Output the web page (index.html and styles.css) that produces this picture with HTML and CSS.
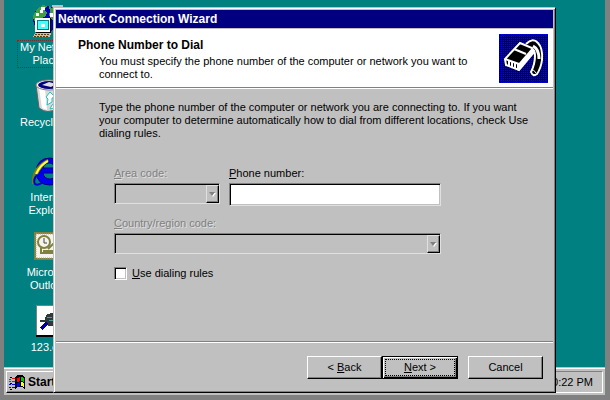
FILE: index.html
```html
<!DOCTYPE html>
<html lang="en">
<head>
<meta charset="UTF-8">
<meta name="viewport" content="width=device-width, initial-scale=1.0">
<title>Network Connection Wizard</title>
<link rel="stylesheet" href="styles.css">
</head>
<body>
  <div class="screen">
    <main class="desktop">
      <ul class="icons">
        <li class="icon selected">
          <svg width="34" height="34" viewBox="0 0 34 34" shape-rendering="crispEdges">
            <circle cx="14" cy="15" r="13" fill="#0000c0"/>
            <path d="M1 12l4-7 6-4 4 1-3 4 3 3-2 4-5 1-2 3H2zM17 2l5 3 3 6-5 5-3-5 1-4z" fill="#40a040"/>
            <path d="M9 3h4v3h-2v3H8zM4 9h3v3H4zM18 9h3v4h-3z" fill="#fff"/>
            <path d="M20 1h11v3h-2v9h-7V3h-2z" fill="#c0c0c0"/>
            <rect x="23" y="4" width="7" height="7" fill="#000080"/>
            <rect x="3" y="14" width="16" height="14" fill="#fff"/>
            <path d="M19 14v15H4v-1h14V14z" fill="#000"/>
            <rect x="5" y="16" width="12" height="10" fill="#008080"/>
            <rect x="6" y="17" width="10" height="8" fill="#40ffff"/>
            <rect x="9" y="20" width="4" height="3" fill="#fff"/>
            <path d="M3 29h16l-1 4H1z" fill="#c0c0c0"/>
            <path d="M3 30h15M2 32h15" stroke="#604000" stroke-dasharray="2 1"/>
          </svg>
          <span class="name">My Network Places</span>
        </li>
        <li class="icon">
          <svg width="34" height="34" viewBox="0 0 34 34">
            <path d="M4 6l3 23q9 7 18 0l3-23z" fill="#d8d8d8" stroke="#606060"/>
            <path d="M7 9l3 20 5 2-2-21z" fill="#fff"/>
            <ellipse cx="17" cy="6" rx="13" ry="5" fill="#fff" stroke="#808080"/>
            <ellipse cx="17" cy="6" rx="11" ry="4" fill="#000080"/>
            <path d="M10 6l7-3 7 2-5 3z" fill="#e0e0e0"/>
            <path d="M14 18l4-5 5 5-3 1v4l-5 3 1-6zM20 26l5-3v5l-7 2z" fill="#fff" stroke="#20c0c0"/>
          </svg>
          <span class="name">Recycle Bin</span>
        </li>
        <li class="icon">
          <svg width="34" height="34" viewBox="0 0 34 34">
            <path d="M30 19H11q1 6 7 6 4 0 5-3h7q-3 9-12 9Q5 31 4 18 5 4 18 4q12 0 12 15zM11 14h12q-1-5-6-5-5 0-6 5z" fill="#0000f0" stroke="#000080" fill-rule="evenodd"/>
            <path d="M1 30Q0 14 16 6 9 12 5 20" fill="none" stroke="#808000" stroke-width="2"/>
            <path d="M4 20Q8 11 16 7" fill="none" stroke="#ffff40" stroke-width="2"/>
            <path d="M4 22q-3 5-1 8 3 2 8-2" fill="none" stroke="#0000d0" stroke-width="2"/>
          </svg>
          <span class="name">Internet Explorer</span>
        </li>
        <li class="icon">
          <svg width="34" height="34" viewBox="0 0 34 34">
            <rect x="3" y="4" width="28" height="26" fill="#f4f4ec" stroke="#808040" stroke-width="2"/>
            <rect x="4" y="5" width="26" height="24" fill="none" stroke="#b0a890" stroke-dasharray="1 1"/>
            <circle cx="12" cy="13" r="6" fill="none" stroke="#808040" stroke-width="2"/>
            <path d="M12 9v5h3" fill="none" stroke="#404040"/>
            <path d="M9 19v5h19v-9h-7l-5 5M11 22h10" fill="none" stroke="#808040" stroke-width="2"/>
          </svg>
          <span class="name">Microsoft Outlook</span>
        </li>
        <li class="icon">
          <svg width="34" height="34" viewBox="0 0 34 34" shape-rendering="crispEdges">
            <path d="M4 1h26v31H4z" fill="#fff"/>
            <path d="M4 32V1h26" fill="none" stroke="#808080"/>
            <path d="M4 32h26V1" fill="none" stroke="#000" stroke-width="2"/>
            <path d="M14 11l5-2 6 2 2 8-4 4-9-2-1-3H8v-2h5z" fill="#303838"/>
            <path d="M15 13h5M17 16h5M21 19h3" stroke="#40a0a0" stroke-width="1"/>
            <path d="M15 19l-6 6" stroke="#0000a0" stroke-width="3"/>
          </svg>
          <span class="name">123.cer</span>
        </li>
      </ul>
    </main>

    <footer class="taskbar">
      <button type="button" class="start">
        <svg width="17" height="15" viewBox="0 0 17 15" shape-rendering="crispEdges">
          <path d="M6 2l3-2h4l3 2v12l-3-2H9l-3 2z" fill="#000"/>
          <path d="M8 3l3-1v4L8 7z" fill="#f00"/>
          <path d="M12 2l3 1v4l-3-1z" fill="#0c0"/>
          <path d="M8 8l3-1v4l-3 1z" fill="#00f"/>
          <path d="M12 7l3 1v4l-3-1z" fill="#ff0"/>
          <path d="M0 4h2M3 3h3M0 6h2M3 6h3" stroke="#f00" stroke-width="1"/>
          <path d="M0 9h2M3 9h3M0 12h2M3 12h3" stroke="#00f" stroke-width="1"/>
          <path d="M1 2h2M1 8h2M1 14h2" stroke="#000" stroke-width="1"/>
        </svg>
        Start
      </button>
      <div class="tray">10:22 PM</div>
    </footer>

    <!-- Wizard window -->
    <section class="dialog">
      <h1 class="titlebar">Network Connection Wizard</h1>

      <header class="banner">
        <div>
          <h2>Phone Number to Dial</h2>
          <p>You must specify the phone number of the computer or network you want to connect to.</p>
        </div>
        <svg class="plug" width="49" height="49" viewBox="0 0 49 49">
          <defs>
            <pattern id="dots" width="2" height="2" patternUnits="userSpaceOnUse">
              <rect width="2" height="2" fill="#000018"/>
              <rect width="1" height="1" fill="#0000ff"/>
            </pattern>
          </defs>
          <rect width="49" height="49" fill="#000"/>
          <rect width="49" height="49" fill="url(#dots)" shape-rendering="crispEdges"/>
          <rect x="1" y="1" width="47" height="47" fill="none" stroke="#0000a0" stroke-width="2" stroke-dasharray="1 1"/>
          <path d="M27 10q7-7 12-1 5 5 4 17-1 8-5 14-4 3-6-2 4-8 4-16 0-6-3-7" fill="#000" stroke="#fff" stroke-width="2"/>
          <path d="M34 12q6 3 6 13" fill="none" stroke="#fff" stroke-width="3"/>
          <path d="M32 36q3-1 5 3" fill="none" stroke="#fff" stroke-width="1"/>
          <path d="M21 9l12 5 2 4-15 18-13-5-1-6z" fill="#000" stroke="#fff" stroke-width="2"/>
          <path d="M33 14L20 29v7l15-18z" fill="#fff"/>
          <path d="M6 25l14 5M15 15l12 5" stroke="#fff" stroke-width="2"/>
          <path d="M10 26v6M13 27v6M16 28v6M19 29v6" stroke="#fff" stroke-width="2"/>
        </svg>
      </header>

      <form class="page">
        <p>Type the phone number of the computer or network you are connecting to. If you want your computer to determine automatically how to dial from different locations, check Use dialing rules.</p>

        <div class="fields">
          <div class="field">
            <label class="off" for="area"><u>A</u>rea code:</label>
            <div class="combo">
              <select id="area" disabled><option></option></select>
              <span class="arrow"><svg width="7" height="5" viewBox="0 0 7 5"><path d="M1 1h6L4 5z" fill="#fff"/><path d="M0 0h6L3 4z" fill="#808080"/></svg></span>
            </div>
          </div>
          <div class="field">
            <label for="phone"><u>P</u>hone number:</label>
            <input type="text" id="phone">
          </div>
          <div class="field wide">
            <label class="off" for="country"><u>C</u>ountry/region code:</label>
            <div class="combo">
              <select id="country" disabled><option></option></select>
              <span class="arrow"><svg width="7" height="5" viewBox="0 0 7 5"><path d="M1 1h6L4 5z" fill="#fff"/><path d="M0 0h6L3 4z" fill="#808080"/></svg></span>
            </div>
          </div>
          <div class="check">
            <input type="checkbox" id="rules">
            <label for="rules"><u>U</u>se dialing rules</label>
          </div>
        </div>
      </form>

      <div class="buttons">
        <button type="button">&lt; <u>B</u>ack</button>
        <button type="button" class="default"><span><u>N</u>ext &gt;</span></button>
        <button type="button" class="cancel">Cancel</button>
      </div>
    </section>
  </div>
</body>
</html>
```

FILE: styles.css
```css
* {
  box-sizing: border-box;
}

body {
  margin: 0;
  font-family: "Liberation Sans", Arial, sans-serif;
  font-size: 11px;
  line-height: 13px;
  color: #000;
}

h1, h2, p, ul {
  margin: 0;
  padding: 0;
}

button, input, select {
  margin: 0;
  font: inherit;
  color: inherit;
}

/* Monitor frame around the desktop */
.screen {
  position: relative;
  display: flex;
  flex-direction: column;
  min-height: 100vh;
  overflow: hidden;
  border-left: 4px solid #808080;
  border-right: 5px solid #808080;
  border-bottom: 5px solid #808080;
}

.screen::after {
  content: "";
  position: absolute;
  inset: 0 -5px -5px -4px;
  border-left: 1px solid #c0c0c0;
  border-right: 2px solid #404040;
  border-bottom: 2px solid #202020;
  pointer-events: none;
}

.desktop {
  flex: 1;
  background: #008080;
}

.icons {
  list-style: none;
  width: 90px;
  padding-top: 4px;
}

.icon {
  display: flex;
  flex-direction: column;
  align-items: center;
  height: 75px;
  color: #fff;
  text-align: center;
}

.icon:last-child {
  height: 55px;
}

.icon svg {
  flex: none;
}

.name {
  width: 62px;
  margin-top: 3px;
}

.selected .name {
  outline: 1px dotted #e00000;
}

/* Taskbar */
.taskbar {
  display: flex;
  justify-content: space-between;
  height: 28px;
  padding: 2px;
  background: #c0c0c0;
  border-top: 1px solid #c0c0c0;
  box-shadow: inset 0 1px #fff;
}

.start {
  display: flex;
  align-items: center;
  gap: 2px;
  width: 54px;
  height: 22px;
  margin-top: 1px;
  padding: 0 2px;
  background: #c0c0c0;
  border: 1px solid;
  border-color: #fff #000 #000 #fff;
  box-shadow: inset -1px -1px #808080;
  font-size: 12px;
  font-weight: bold;
}

.tray {
  width: 86px;
  margin-top: 1px;
  padding: 4px 9px;
  border: 1px solid;
  border-color: #808080 #fff #fff #808080;
  text-align: right;
}

/* Wizard window */
.dialog {
  position: absolute;
  top: 7px;
  left: 49px;
  right: 49px;
  padding: 2px;
  background: #c0c0c0;
  border: 1px solid;
  border-color: #c0c0c0 #000 #000 #c0c0c0;
  box-shadow: inset 1px 1px #fff, inset -1px -1px #808080;
}

.titlebar {
  height: 18px;
  padding: 0 2px;
  background: #000080;
  color: #fff;
  font-size: 12px;
  line-height: 18px;
}

.banner {
  display: flex;
  justify-content: space-between;
  height: 59px;
  margin-top: 1px;
  padding: 5px 5px 0 22px;
  background: #fff;
  border-bottom: 1px solid #808080;
}

.banner h2 {
  margin-top: 5px;
  font-size: 12px;
  line-height: 13px;
}

.banner p {
  max-width: 400px;
  margin-top: 3px;
  padding-left: 21px;
}

.plug {
  flex: none;
}

.page {
  height: 254px;
  padding: 12px 25px 0 43px;
  border-top: 1px solid #fff;
  border-bottom: 1px solid #808080;
}

.fields {
  display: grid;
  grid-template-columns: 106px 212px;
  column-gap: 9px;
  padding: 27px 0 0 15px;
}

.field {
  height: 50px;
}

.field label {
  display: block;
  margin-bottom: 3px;
}

.wide,
.check {
  grid-column: 1 / 3;
}

.off {
  color: #808080;
  text-shadow: 1px 1px #dfdfdf;
}

.combo {
  position: relative;
}

.field select,
.field input {
  appearance: none;
  display: block;
  width: 100%;
  height: 21px;
  padding: 0 4px;
  background: #c0c0c0;
  border: 1px solid;
  border-color: #808080 #e0e0e0 #e0e0e0 #808080;
  border-radius: 0;
  box-shadow: inset 1px 1px #000;
  opacity: 1;
}

.field input {
  height: 23px;
  background: #fff;
  box-shadow: inset 1px 1px #000, inset -1px -1px #c0c0c0;
}

.arrow {
  position: absolute;
  top: 2px;
  right: 1px;
  bottom: 1px;
  display: flex;
  align-items: center;
  justify-content: center;
  width: 13px;
  background: #c0c0c0;
  border: 1px solid;
  border-color: #e0e0e0 #000 #000 #e0e0e0;
  box-shadow: inset -1px -1px #808080;
}

.check {
  display: flex;
  align-items: center;
  gap: 5px;
}

.check input {
  appearance: none;
  width: 13px;
  height: 13px;
  background: #fff;
  border: 1px solid;
  border-color: #808080 #fff #fff #808080;
  box-shadow: inset 1px 1px #000, inset -1px -1px #c0c0c0;
}

/* Back / Next / Cancel */
.buttons {
  display: flex;
  justify-content: flex-end;
  height: 48px;
  padding: 13px 10px 0;
  border-top: 1px solid #fff;
}

.buttons button {
  width: 75px;
  height: 23px;
  padding: 0;
  background: #c0c0c0;
  border: 1px solid;
  border-color: #fff #000 #000 #fff;
  box-shadow: inset -1px -1px #808080;
}

.buttons .default {
  width: 76px;
  padding: 2px;
  border-color: #000;
  box-shadow: inset 1px 1px #fff, inset -1px -1px #000, inset -2px -2px #808080;
}

.default span {
  display: block;
  padding: 1px 0;
  border: 1px dotted #000;
}

.buttons .cancel {
  margin-left: 10px;
}
```
